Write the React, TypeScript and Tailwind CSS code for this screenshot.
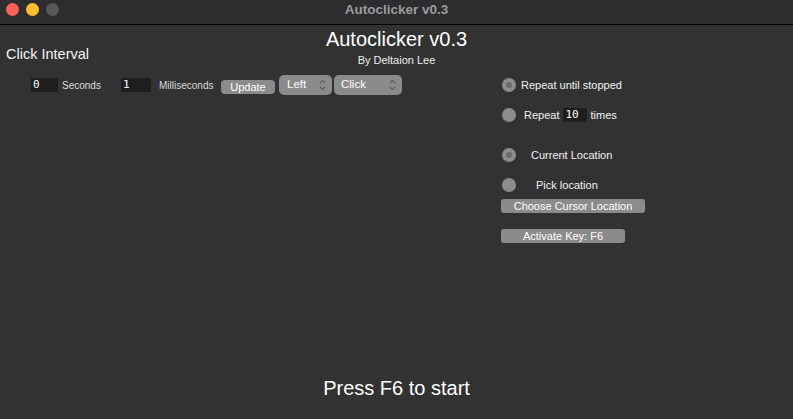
import React from "react";

const sans = { fontFamily: '"Liberation Sans", Arial, sans-serif' } as const;

function Chevrons() {
  return (
    <svg width="7" height="12" viewBox="0 0 7 12" className="shrink-0">
      <polyline points="0.8,4.2 3.5,1.5 6.2,4.2" fill="none" stroke="#5f5f5f" strokeWidth="1.1" />
      <polyline points="0.8,7.8 3.5,10.5 6.2,7.8" fill="none" stroke="#5f5f5f" strokeWidth="1.1" />
    </svg>
  );
}

function Radio({ on }: { on?: boolean }) {
  return (
    <div className="w-[14px] h-[14px] rounded-full bg-[#8c8c8c] flex items-center justify-center shrink-0">
      {on && <div className="w-[6px] h-[6px] rounded-full bg-[#6a6a6a]" />}
    </div>
  );
}

export default function App() {
  return (
    <div
      className="w-[793px] h-[419px] bg-[#323232] flex flex-col overflow-hidden text-[#f2f2f2]"
      style={sans}
    >
      {/* title bar */}
      <div className="h-[25px] shrink-0 bg-[#2d2c2f] border-b border-b-[#000000] flex items-start relative">
        <div className="flex gap-[7px] pl-[6px] pt-[3px]">
          <div className="w-[13px] h-[13px] rounded-full bg-[#fe5f57]" />
          <div className="w-[13px] h-[13px] rounded-full bg-[#febc2e]" />
          <div className="w-[13px] h-[13px] rounded-full bg-[#58575a]" />
        </div>
        <div className="absolute inset-0 flex justify-center pt-[3px] text-[13.5px] font-bold text-[#9c9b9e] leading-none">
          Autoclicker v0.3
        </div>
      </div>

      {/* header */}
      <div className="grid grid-cols-[1fr_auto_1fr] shrink-0">
        <div className="pt-[22px] pl-[6px] text-[14.5px] leading-none text-[#f4f4f4]">Click Interval</div>
        <div className="flex flex-col items-center pt-[4px]">
          <div className="text-[20px] leading-none text-white">Autoclicker v0.3</div>
          <div className="text-[11px] leading-none mt-[6px] text-[#f0f0f0]">By Deltaion Lee</div>
        </div>
        <div />
      </div>

      {/* body */}
      <div className="flex mt-[9px]">
        <div className="w-[501px] shrink-0 flex items-start h-[20px]">
          <div
            className="ml-[31px] mt-[3px] w-[27px] h-[14px] bg-[#1e1e1e] text-[11px] leading-[14px] pl-[2px] text-white"
            style={{ fontFamily: '"DejaVu Sans Mono", monospace' }}
          >
            0
          </div>
          <div className="ml-[4px] w-[59px] h-[20px] flex items-center text-[10px] text-[#dcdcdc]">Seconds</div>
          <div
            className="mt-[3px] w-[30px] h-[14px] bg-[#1e1e1e] text-[11px] leading-[14px] pl-[2px] text-white"
            style={{ fontFamily: '"DejaVu Sans Mono", monospace' }}
          >
            1
          </div>
          <div className="ml-[8px] w-[62px] h-[20px] flex items-center text-[10px] text-[#dcdcdc]">Milliseconds</div>
          <div className="mt-[5px] w-[54px] h-[14px] rounded-[4px] bg-[#8b8b8b] flex items-center justify-center text-[11px] text-white">
            Update
          </div>
          <div className="ml-[4px] w-[53px] h-[20px] rounded-[5px] bg-[#8b8b8b] flex items-center justify-between pl-[8px] pr-[6px] text-[11.5px] text-white">
            <span>Left</span>
            <Chevrons />
          </div>
          <div className="ml-[2px] w-[68px] h-[20px] rounded-[5px] bg-[#8b8b8b] flex items-center justify-between pl-[7px] pr-[6px] text-[11.5px] text-white">
            <span>Click</span>
            <Chevrons />
          </div>
        </div>

        <div className="flex flex-col items-start pt-[3px] text-[11px] text-[#f2f2f2]">
          <div className="flex items-center h-[14px] ml-[1px]">
            <Radio on />
            <span className="ml-[5px]">Repeat until stopped</span>
          </div>
          <div className="flex items-center h-[14px] ml-[1px] mt-[16px]">
            <Radio />
            <span className="ml-[8px]">Repeat</span>
            <div
              className="ml-[4px] w-[24px] h-[14px] bg-[#1e1e1e] text-[11px] leading-[14px] pl-[2px] text-white"
              style={{ fontFamily: '"DejaVu Sans Mono", monospace' }}
            >
              10
            </div>
            <span className="ml-[3px]">times</span>
          </div>
          <div className="flex items-center h-[14px] ml-[1px] mt-[26px]">
            <Radio on />
            <span className="ml-[15px]">Current Location</span>
          </div>
          <div className="flex items-center h-[14px] ml-[1px] mt-[16px]">
            <Radio />
            <span className="ml-[20px]">Pick location</span>
          </div>
          <div className="mt-[7px] w-[144px] h-[14px] rounded-[3px] bg-[#8b8b8b] flex items-center justify-center text-[11px] text-white">
            Choose Cursor Location
          </div>
          <div className="mt-[16px] w-[124px] h-[14px] rounded-[3px] bg-[#8b8b8b] flex items-center justify-center text-[11px] text-white">
            Activate Key: F6
          </div>
        </div>
      </div>

      {/* footer */}
      <div className="mt-auto pb-[21px] flex justify-center text-[20px] leading-none text-white">
        Press F6 to start
      </div>
    </div>
  );
}
